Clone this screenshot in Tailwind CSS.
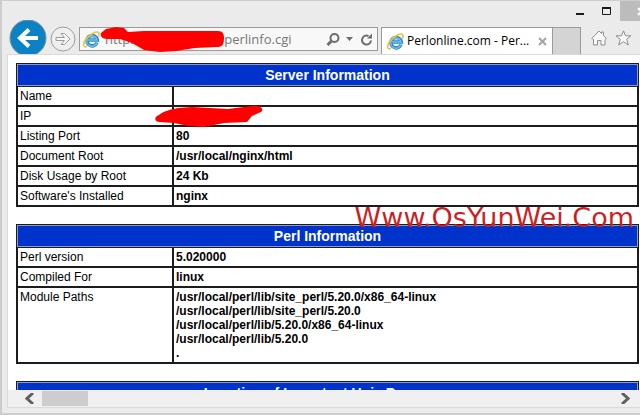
<!DOCTYPE html>
<html lang="en">
<head>
  <meta charset="UTF-8">
  <title>Perlonline.com - Perl Information</title>
  <script src="https://cdn.jsdelivr.net/npm/@tailwindcss/browser@4"></script>
</head>
<body class="relative h-screen flex flex-col overflow-hidden bg-[#ebebeb] border-t border-l-2 border-b-2 border-[#cdcdcd] text-black">

  <!-- browser chrome -->
  <header class="relative h-[53px] shrink-0 flex items-end pl-[7px]">
    <div class="absolute top-0 right-0 h-5 flex">
      <button aria-label="Minimize" class="w-6 flex justify-center items-center">
        <svg class="w-3 h-5" viewBox="0 0 12 20"><path d="M1 13h8" stroke="#1a1a1a" stroke-width="2"/></svg>
      </button>
      <button aria-label="Maximize" class="w-[27px] flex justify-center items-center">
        <svg class="w-3 h-5" viewBox="0 0 12 20"><path d="M1.500 7v6.500h8V7z" fill="none" stroke="#1a1a1a"/><path d="M1 7h9" stroke="#1a1a1a" stroke-width="2"/></svg>
      </button>
      <button aria-label="Close" class="w-5 bg-[#bcbcbc] overflow-hidden">
        <svg class="w-5 h-5" viewBox="0 0 20 20"><path d="M18 7l8 8M18 14l8-8" stroke="#fff" stroke-width="2"/></svg>
      </button>
    </div>

    <button aria-label="Back" class="w-[38px] h-[34px] shrink-0">
      <svg class="w-[38px] h-[34px]" viewBox="0 0 38 34">
        <circle cx="19" cy="18" r="18" fill="#0a82c3" stroke="#7d8f9b"/>
        <path d="M29 18H11M20 9.500l-9 8.500 9 8.500" fill="none" stroke="#fff" stroke-width="4"/>
      </svg>
    </button>
    <button aria-label="Forward" class="w-[26px] h-[26px] shrink-0 ml-[3px] mb-[2px]">
      <svg class="w-[26px] h-[26px]" viewBox="0 0 26 26">
        <circle cx="13" cy="13" r="12" fill="#efefef" stroke="#9c9c9c"/>
        <path d="M6 11.500h8.500l-3.500-4h3.500L20 13l-5.500 5.500H11l3.500-4H6z" fill="#f7f7f7" stroke="#9c9c9c"/>
      </svg>
    </button>

    <div class="flex-1 min-w-0 h-6 mb-[3px] ml-[3px] flex items-center border border-[#9a9a9a] bg-[#f8f8f8] pl-[3px] pr-1">
      <svg class="w-[17px] h-[17px] shrink-0" viewBox="0 0 17 17">
        <path d="M14 11.500A5.200 5.200 0 1 1 14.300 9H5" fill="none" stroke="#2b86c5" stroke-width="3.500"/>
        <path d="M13.800 11.700A5.200 5.200 0 1 1 14 9H5" fill="none" stroke="#6cc0ee" stroke-width="1.500"/>
        <path d="M4 15.500C0 17-.5 12.500 3 8S13 0 15.500 1.500c1 .700.800 2.200 0 4" fill="none" stroke="#f0c030" stroke-width="1.500"/>
      </svg>
      <input aria-label="Address" class="flex-1 min-w-0 ml-[5px] bg-transparent text-[13px] leading-5 text-[#777] font-['Open_Sans',sans-serif] outline-none" type="text" value="http://                        perlinfo.cgi">
      <button aria-label="Search" class="w-[15px] shrink-0">
        <svg class="w-[15px] h-[15px]" viewBox="0 0 15 15"><circle cx="8.500" cy="6" r="4" fill="none" stroke="#6d6d6d" stroke-width="2"/><path d="M5.500 9L1.500 13" stroke="#6d6d6d" stroke-width="3"/></svg>
      </button>
      <button aria-label="Show history" class="w-[7px] shrink-0 ml-[5px]">
        <svg class="w-[7px] h-1" viewBox="0 0 7 4"><path d="M0 0h7L3.500 4z" fill="#6d6d6d"/></svg>
      </button>
      <button aria-label="Refresh" class="w-[13px] shrink-0 ml-[7px]">
        <svg class="w-[13px] h-[13px]" viewBox="0 0 13 13"><path d="M11 7.500A4.500 4.500 0 1 1 8.500 3" fill="none" stroke="#6d6d6d" stroke-width="2"/><path d="M7 5.500h5V.500z" fill="#6d6d6d"/></svg>
      </button>
    </div>

    <div class="w-[172px] h-[27px] shrink-0 ml-[3px] flex items-center bg-white border-t border-x border-[#9a9a9a] pl-[5px] pr-[5px]">
      <svg class="w-[17px] h-[17px] shrink-0" viewBox="0 0 17 17">
        <path d="M14 11.500A5.200 5.200 0 1 1 14.300 9H5" fill="none" stroke="#2b86c5" stroke-width="3.500"/>
        <path d="M13.800 11.700A5.200 5.200 0 1 1 14 9H5" fill="none" stroke="#6cc0ee" stroke-width="1.500"/>
        <path d="M4 15.500C0 17-.5 12.500 3 8S13 0 15.500 1.500c1 .700.800 2.200 0 4" fill="none" stroke="#f0c030" stroke-width="1.500"/>
      </svg>
      <span class="flex-1 ml-[3px] whitespace-nowrap text-[12px] leading-5 font-['Open_Sans',sans-serif]">Perlonline.com - Per...</span>
      <button aria-label="Close tab" class="w-[9px] shrink-0">
        <svg class="w-[9px] h-[9px]" viewBox="0 0 9 9"><path d="M1 1l7 7M8 1L1 8" stroke="#a3a3a3" stroke-width="2"/></svg>
      </button>
    </div>
    <button aria-label="New tab" class="w-7 h-[27px] shrink-0 bg-[#d4d4d4] border-t border-r border-[#9a9a9a]"></button>
    <div class="h-8 shrink-0 flex items-center gap-2 pl-[10px] pr-2">
      <button aria-label="Home">
        <svg class="w-4 h-4" viewBox="0 0 16 16"><path d="M.7 8.500L8 1l2.500 2.500V2h2v3.500l2.800 3-1.300 1V15h-4v-4.500H6.500V15H2.500V9.500z" fill="#f8f8f8" stroke="#8f8f8f"/></svg>
      </button>
      <button aria-label="Favorites">
        <svg class="w-[17px] h-4" viewBox="0 0 17 16"><path d="M8.500.800l2 5h5.500l-4.300 3.500 1.600 5.700-4.800-3.300L3.700 15l1.600-5.700L1 5.800h5.500z" fill="#f8f8f8" stroke="#8f8f8f"/></svg>
      </button>
    </div>
  </header>

  <!-- page content -->
  <main class="flex-1 min-h-0 overflow-hidden ml-[5px] border-l border-t border-[#dadada] bg-white pl-2 pr-px pt-2 font-['Liberation_Sans',Arial,sans-serif] text-[12px] leading-[14px]">
    <table class="w-full table-fixed border-separate border-spacing-0 border border-[#1c1c1c] mb-[17px]">
      <colgroup><col class="w-[156px]"><col></colgroup>
      <thead>
        <tr><th colspan="2" class="h-[22px] border border-[#8f9cc0] bg-[#0033cc] text-white text-[14px] leading-5 font-bold">Server Information</th></tr>
      </thead>
      <tbody>
        <tr><td class="border border-[#1c1c1c] p-[2px]">Name</td><td class="border border-[#1c1c1c] p-[2px] font-bold"></td></tr>
        <tr>
          <td class="border border-[#1c1c1c] p-[2px]">IP</td>
          <td class="relative border border-[#1c1c1c] p-[2px] font-bold">
            <svg class="absolute -left-5 -top-[2px] w-[110px] h-6" viewBox="0 0 110 24"><path d="M5 10C10 6 18 4 24 3L38 2 74 4 98 1C106 0 111 4 107 7L98 11 93 17 70 18 50 22 34 21 20 18 5 17C0 16 0 12 5 10z" fill="#f00"/></svg>
          </td>
        </tr>
        <tr><td class="border border-[#1c1c1c] p-[2px]">Listing Port</td><td class="border border-[#1c1c1c] p-[2px] font-bold">80</td></tr>
        <tr><td class="border border-[#1c1c1c] p-[2px]">Document Root</td><td class="border border-[#1c1c1c] p-[2px] font-bold">/usr/local/nginx/html</td></tr>
        <tr><td class="border border-[#1c1c1c] p-[2px]">Disk Usage by Root</td><td class="border border-[#1c1c1c] p-[2px] font-bold">24 Kb</td></tr>
        <tr><td class="border border-[#1c1c1c] p-[2px]">Software's Installed</td><td class="border border-[#1c1c1c] p-[2px] font-bold">nginx</td></tr>
      </tbody>
    </table>

    <table class="w-full table-fixed border-separate border-spacing-0 border border-[#1c1c1c] mb-[17px]">
      <colgroup><col class="w-[156px]"><col></colgroup>
      <thead>
        <tr><th colspan="2" class="h-[22px] border border-[#8f9cc0] bg-[#0033cc] text-white text-[14px] leading-5 font-bold">Perl Information</th></tr>
      </thead>
      <tbody>
        <tr><td class="border border-[#1c1c1c] p-[2px]">Perl version</td><td class="border border-[#1c1c1c] p-[2px] font-bold">5.020000</td></tr>
        <tr><td class="border border-[#1c1c1c] p-[2px]">Compiled For</td><td class="border border-[#1c1c1c] p-[2px] font-bold">linux</td></tr>
        <tr>
          <td class="border border-[#1c1c1c] p-[2px] align-top">Module Paths</td>
          <td class="border border-[#1c1c1c] p-[2px] font-bold">/usr/local/perl/lib/site_perl/5.20.0/x86_64-linux<br>/usr/local/perl/lib/site_perl/5.20.0<br>/usr/local/perl/lib/5.20.0/x86_64-linux<br>/usr/local/perl/lib/5.20.0<br>.</td>
        </tr>
      </tbody>
    </table>

    <table class="w-full table-fixed border-separate border-spacing-0 border border-[#1c1c1c]">
      <thead>
        <tr><th class="h-[22px] border border-[#8f9cc0] bg-[#0033cc] text-white text-[14px] leading-5 font-bold">Location of Important Unix Programs</th></tr>
      </thead>
    </table>
  </main>

  <!-- horizontal scrollbar -->
  <div class="h-[18px] shrink-0 ml-[5px] mb-[5px] flex items-center border-l border-b border-[#dadada] bg-[#f0f0f0] pl-[17px] pr-[10px]">
    <button aria-label="Scroll left" class="w-[9px] shrink-0">
      <svg class="w-[9px] h-[11px]" viewBox="0 0 9 11"><path d="M8 0L2 5.500 8 11" fill="none" stroke="#606060" stroke-width="3"/></svg>
    </button>
    <div class="w-[46px] h-[15px] ml-2 bg-[#cdcdcd]"></div>
    <button aria-label="Scroll right" class="w-[9px] shrink-0 ml-auto">
      <svg class="w-[9px] h-[11px]" viewBox="0 0 9 11"><path d="M1 0l6 5.500L1 11" fill="none" stroke="#606060" stroke-width="3"/></svg>
    </button>
  </div>

  <!-- red marker over the host name -->
  <svg class="absolute left-[98px] top-[26px] w-[127px] h-[26px] pointer-events-none" viewBox="0 0 127 26"><path d="M6 2L16 0 24 1 28 5 44 4 118 4C123 4 124 7 124 11 124 18 122 20 117 20L95 21 76 24 60 25 44 23 32 16 20 12 8 12C2 12 0 9 1 6z" fill="#f00"/></svg>

  <!-- site watermark -->
  <div class="absolute right-[6px] top-[201px] whitespace-nowrap text-[27px] leading-8 text-[#cc1f24] font-['DejaVu_Sans',sans-serif]">Www.OsYunWei.Com</div>
</body>
</html>
